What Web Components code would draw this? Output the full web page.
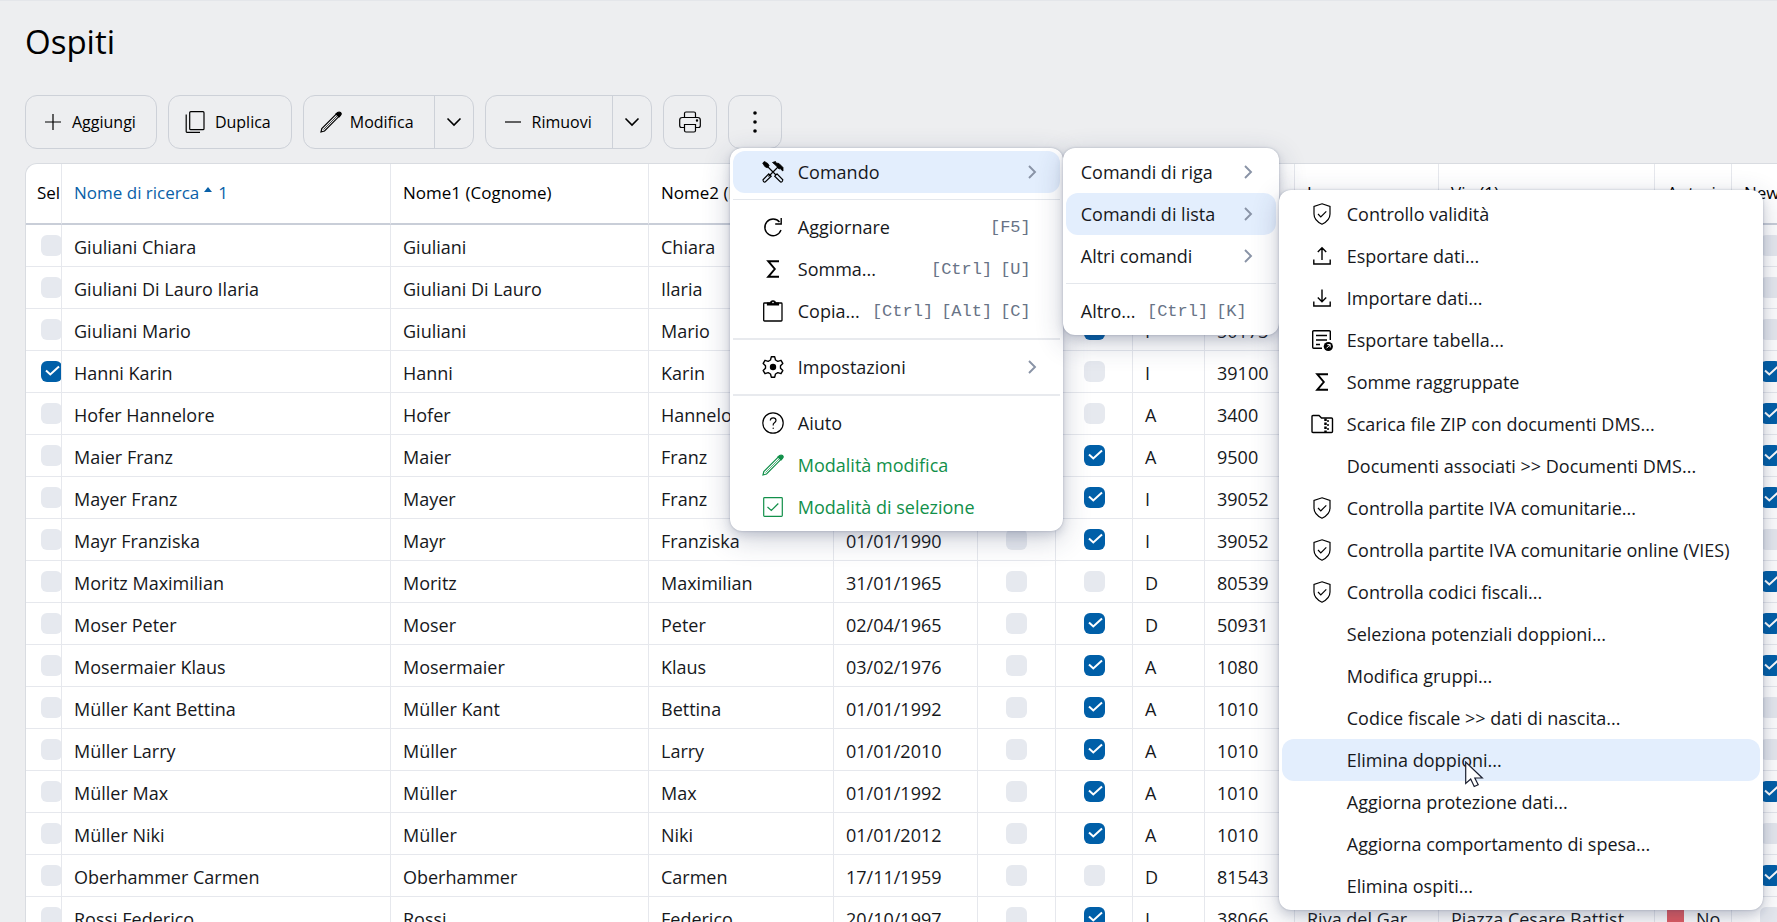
<!DOCTYPE html>
<html lang="it">
<head>
<meta charset="utf-8">
<title>Ospiti</title>
<style>
  html, body { margin: 0; height: 100%; }
  body {
    font-family: "Open Sans", "Noto Sans", sans-serif;
    color: #16181c;
    background: #edeef0;
    overflow: hidden;
  }
</style>
</head>
<body>
<guests-page></guests-page>

<script>
const ICONS = {
  plus: '<path d="M3 11h16M11 3v16"/>',
  minus: '<path d="M3 11h16"/>',
  copy: '<rect x="4.700" y=".7" width="14.300" height="18" rx="1"/><path d="M1.200 3.500V20.500q0 .8.8.8H15"/>',
  pencil: '<path d="M1 21l.8-3.500L16.500 2.800l2.500 2.500L4.500 20z"/><path d="M3.500 18.500L17 5" stroke-width=".7"/><path d="M16 3q2.500-3 4.500-1.500T19 6z" fill="currentColor"/>',
  down: '<path d="M4.500 7.500L11 14l6.500-6.500" stroke-width="1.600"/>',
  right: '<path d="M8 5l6 6-6 6" stroke-width="1.900"/>',
  print: '<path d="M5.500 6V2.500Q5.500 1 7 1h8q1.500 0 1.500 1.500V6M5.500 16.500H2.500Q.7 16.500.7 14.500V9Q.7 6.500 3.200 6.500h15.600Q21.300 6.500 21.300 9v5.500q0 2-1.800 2h-3"/><path d="M5.500 13.500h11V19.500q0 1.500-1.500 1.500H7q-1.500 0-1.500-1.500z"/><circle cx="18" cy="9.500" r=".6" fill="currentColor"/>',
  dots: '<g fill="currentColor" stroke="none"><circle cx="11" cy="2" r="1.800"/><circle cx="11" cy="11" r="1.800"/><circle cx="11" cy="20" r="1.800"/></g>',
  tools: '<path d="M5 5l9 9M16.500 5.500L6.500 15.500"/><path d="M.7 2l1.800-1.500 3.500 2.200 1.200 2.300-2 1.800L2.800 5.500z" fill="currentColor" stroke-width=".8"/><path d="M10.500 1.500L13.500.5 14 2 17 2.500 21 6.500V10l-1.500-1-1-1.500L17 8l-3-3.500z" fill="currentColor" stroke-width=".8"/><path d="M6.800 12.800l2.400 2.400-6 5.800q-2 .5-2.200-2.200z"/><path d="M15 12.800l-2.300 2.400L18.500 21q2 .3 2.300-2.200z"/>',
  refresh: '<path d="M19 14A8.300 8.300 0 1 1 17.500 6M19.200 2v6h-6" stroke-width="1.400"/>',
  sigma: '<path d="M17 3.200H6.200L12.800 11 6.200 18.800H17" stroke-width="1.900"/>',
  clipboard: '<rect x="1.700" y="3" width="18.300" height="18" rx=".8" stroke-width="1.300"/><path d="M5.500 3v2h11V3h-3Q13.500.8 11 .8T8.500 3z" fill="currentColor"/><circle cx="11" cy="2.500" r=".8" fill="#fff" stroke="none"/>',
  gear: '<path d="M9.300.8h3.400l.8 3.200 2.300 1.300 3.200-1 1.800 3.100L18.500 9.700v2.600l2.300 2.300-1.800 3.100-3.200-1-2.300 1.300-.8 3.200H9.300l-.8-3.200-2.300-1.300-3.200 1-1.800-3.100 2.300-2.300V9.700L1.200 7.400 3 4.300l3.200 1L8.500 4z" stroke-width="1.400" stroke-linejoin="round"/><circle cx="11" cy="11" r="3.200" fill="currentColor" stroke="none"/>',
  help: '<circle cx="11" cy="11" r="10.200"/><path d="M8.300 8.500Q8.500 5.800 11.200 5.800T14 8.300Q14 9.800 12.400 10.700T11.200 13.500"/><circle cx="11.200" cy="16.300" r=".7" fill="currentColor" stroke="none"/>',
  checkbox: '<rect x="1.700" y="1.700" width="18.600" height="18.600" rx=".8"/><path d="M5.500 11l3.800 3.500 7-7"/>',
  shield: '<path d="M11 .8l8 2.700v7.500q0 6.500-8 10.200Q3 17.500 3 11V3.500z"/><path d="M7 11l2.800 2.800 5.500-5.500"/>',
  upload: '<path d="M2.800 14.500v4.500h16.400v-4.500M11 15V3M6.800 7L11 2.800 15.200 7" stroke-width="1.400"/>',
  download: '<path d="M2.800 14.500v4.500h16.400v-4.500M11 2.500v12M6.800 10.500L11 14.700l4.200-4.200" stroke-width="1.400"/>',
  tableOut: '<path d="M19.300 11V2.700q0-1-1-1H2.700q-1 0-1 1v15.600q0 1 1 1H11M5 6.500h11M5 11h11M5 15.500h4" stroke-width="1.400"/><circle cx="17.300" cy="17.500" r="4.600" fill="currentColor" stroke="none"/><path d="M15.500 19.300l3.500-3.500M16.300 15.600h2.900v2.900" stroke="#fff" stroke-width="1"/>',
  zip: '<path d="M1 18.500V3.500q0-1 1-1h6l2.500 2.500H20.500q1 0 1 1v12.500q0 1-1 1H2q-1 0-1-1z" stroke-width="1.400"/><path d="M14.500 5.500v13.500" stroke-width="2.500" stroke-dasharray="2.500 1.500"/><path d="M17 7v12" stroke-width="1.500" stroke-dasharray="2 2"/>'
};

const define = (name, css, html) => customElements.define(name, class extends HTMLElement {
  connectedCallback() {
    if (this.shadowRoot) return;
    const root = this.attachShadow({ mode: "open" });
    const template = document.createElement("template");
    template.innerHTML = `<style>${css}</style>${typeof html === "function" ? html(this) : html}`;
    root.append(template.content.cloneNode(true));
  }
});

define("ui-icon", `
  :host { display: block; width: 22px; height: 22px; flex: none; }
  svg { display: block; width: 100%; height: 100%; overflow: visible; }`,
  el => `<svg viewBox="0 0 22 22" fill="none" stroke="currentColor" stroke-width="1.200" aria-hidden="true">${ICONS[el.getAttribute("name")] || ""}</svg>`);

define("tool-button", `
  :host { display: flex; height: 54px; box-sizing: border-box; border: 1px solid #cdd1d8; border-radius: 12px; color: #000; }
  button {
    display: flex; align-items: center; gap: 8px; padding: 0 20px 0 16px;
    font: inherit; font-size: 16px; line-height: 24px; color: inherit;
    background: none; border: 0;
  }
  button.icon { padding: 0 15px; }
  button.more { padding: 0 8px; border-left: 1px solid #cdd1d8; }`,
  el => {
    const icon = `<ui-icon name="${el.getAttribute("icon")}"></ui-icon>`;
    if (el.hasAttribute("label")) return `<button class="icon" type="button" aria-label="${el.getAttribute("label")}">${icon}</button>`;
    return `<button type="button">${icon}<slot></slot></button>` +
      (el.hasAttribute("split") ? `<button class="more" type="button" aria-label="Altre opzioni"><ui-icon name="down"></ui-icon></button>` : "");
  });

define("menu-panel", `
  :host {
    display: block; box-sizing: border-box; width: max-content; padding: 3px;
    background: #fff; border-radius: 12px;
    box-shadow: 0 0 2px rgba(40, 56, 90, .3), 0 4px 8px rgba(40, 56, 90, .14), 0 8px 28px rgba(40, 56, 90, .24);
  }`, `<div role="menu"><slot></slot></div>`);

define("menu-rule", `
  :host { display: block; height: 1px; margin: 6px 0; background: #e4e7ec; }
  :host([thick]) { height: 2px; background: #e8eaee; }`, ``);

define("menu-entry", `
  :host { display: block; position: relative; }
  button {
    display: flex; align-items: center; width: 100%; height: 42px; box-sizing: border-box;
    padding: 0 29px 1px; border: 0; border-radius: 12px; background: none;
    font: inherit; font-size: 18px; line-height: 26px; color: inherit; text-align: left; white-space: nowrap;
  }
  ui-icon { color: #000; margin-right: 14px; }
  :host([plain]) button { padding-left: 15px; }
  :host([active]) button { background: #e3eefd; }
  :host([tone="green"]), :host([tone="green"]) ui-icon { color: #12904a; }
  .end { margin-left: auto; display: flex; gap: 8px; padding-left: 10px; }
  kbd { font: 17px/24px "Liberation Mono", monospace; color: #687386; padding-top: 2px; }
  .end ui-icon { color: #8993a6; margin: 0 -12px 0 0; }
  ::slotted(menu-panel) { position: absolute; top: -3px; left: calc(100% + 3px); z-index: 1; }`,
  el => {
    const keys = (el.getAttribute("keys") || "").split(" ").filter(Boolean);
    const end = el.hasAttribute("arrow") ? `<ui-icon name="right"></ui-icon>` : keys.map(k => `<kbd>[${k}]</kbd>`).join("");
    return `<button type="button" role="menuitem">` +
      (el.hasAttribute("plain") ? "" : `<ui-icon name="${el.getAttribute("icon") || ""}"></ui-icon>`) +
      `<span>${el.getAttribute("text")}</span>` +
      (end ? `<span class="end">${end}</span>` : "") + `</button><slot></slot>`;
  });

define("guest-table", `
  :host { display: block; overflow: hidden; box-sizing: border-box; background: #fff; border: solid #d9dce1; border-width: 1px 0 0 1px; border-radius: 12px 0 0 0; }
  table { border-collapse: separate; border-spacing: 0; table-layout: fixed; width: 1784px; font-size: 18px; line-height: 26px; }
  th, td { box-sizing: border-box; padding: 0 0 0 12px; border-right: 1px solid #e6e8ed; overflow: hidden; white-space: nowrap; text-align: left; font-weight: 400; }
  th { height: 61px; font-size: 17px; color: #000; border-bottom: 2px solid #c9ced8; padding-bottom: 2px; }
  td { height: 42px; border-bottom: 1px solid #e6e8ed; padding-top: 2px; }
  th.sorted { color: #0860a8; }
  .arrow { display: inline-block; vertical-align: 7px; margin: 0 6px 0 5px; border: solid transparent; border-width: 0 4px 5px; border-bottom-color: #0860a8; }
  td.center { padding-left: 0; text-align: center; }
  td.sel { padding-left: 15px; }
  th.sel { padding-left: 11px; }
  input {
    appearance: none; display: inline-block; width: 21px; height: 21px; margin: 0 0 5px; vertical-align: middle;
    border-radius: 6px; background: #e6e9ef;
  }
  input:checked { background: #005fa8 url('data:image/svg+xml,<svg xmlns="http://www.w3.org/2000/svg" viewBox="0 0 21 21" fill="none" stroke="white" stroke-width="2"><path d="M5 9.500l4.300 4 8.700-8"/></svg>'); }
  .flag { display: flex; align-items: center; gap: 12px; }
  .flag i { width: 17px; height: 34px; background: #e25c62; }`,
  () => {
    const cols = [36, 329, 258, 185, 144, 78, 77, 72, 90, 144, 216, 77, 78];
    const rows = [
      ["Giuliani Chiara", "Giuliani", "Chiara", "", "", "", 0, 0],
      ["Giuliani Di Lauro Ilaria", "Giuliani Di Lauro", "Ilaria", "", "", "", 0, 0],
      ["Giuliani Mario", "Giuliani", "Mario", "", "I", "50173", 1, 0],
      ["Hanni Karin", "Hanni", "Karin", "", "I", "39100", 0, 1],
      ["Hofer Hannelore", "Hofer", "Hannelore", "", "A", "3400", 0, 1],
      ["Maier Franz", "Maier", "Franz", "", "A", "9500", 1, 1],
      ["Mayer Franz", "Mayer", "Franz", "", "I", "39052", 1, 1],
      ["Mayr Franziska", "Mayr", "Franziska", "01/01/1990", "I", "39052", 1, 0],
      ["Moritz Maximilian", "Moritz", "Maximilian", "31/01/1965", "D", "80539", 0, 1],
      ["Moser Peter", "Moser", "Peter", "02/04/1965", "D", "50931", 1, 1],
      ["Mosermaier Klaus", "Mosermaier", "Klaus", "03/02/1976", "A", "1080", 1, 1],
      ["Müller Kant Bettina", "Müller Kant", "Bettina", "01/01/1992", "A", "1010", 1, 0],
      ["Müller Larry", "Müller", "Larry", "01/01/2010", "A", "1010", 1, 0],
      ["Müller Max", "Müller", "Max", "01/01/1992", "A", "1010", 1, 1],
      ["Müller Niki", "Müller", "Niki", "01/01/2012", "A", "1010", 1, 0],
      ["Oberhammer Carmen", "Oberhammer", "Carmen", "17/11/1959", "D", "81543", 0, 1],
      ["Rossi Federico", "Rossi", "Federico", "20/10/1997", "I", "38066", 1, 0, "Riva del Gar", "Piazza Cesare Battist", "No"]
    ];
    const box = (on, label) => `<input type="checkbox" aria-label="${label}"${on ? " checked" : ""}>`;
    return `<table><colgroup>${cols.map(w => `<col style="width:${w}px">`).join("")}</colgroup>
      <thead><tr><th class="sel">Sel</th><th class="sorted">Nome di ricerca<span class="arrow"></span>1</th><th>Nome1 (Cognome)</th><th>Nome2 (Nome)</th>
      <th></th><th></th><th></th><th></th><th></th><th>Luogo</th><th>Via (1)</th><th>Autori</th><th>New</th></tr></thead>
      <tbody>${rows.map(r => `<tr><td class="sel">${box(r[0] === "Hanni Karin", "Seleziona " + r[0])}</td>
        <td>${r[0]}</td><td>${r[1]}</td><td>${r[2]}</td><td>${r[3]}</td>
        <td class="center">${box(0, "Opzione 1 " + r[0])}</td><td class="center">${box(r[6], "Opzione 2 " + r[0])}</td>
        <td>${r[4]}</td><td>${r[5]}</td><td>${r[8] || ""}</td><td>${r[9] || ""}</td>
        <td>${r[10] ? `<span class="flag"><i></i>${r[10]}</span>` : ""}</td><td class="center">${box(r[7], "Newsletter " + r[0])}</td></tr>`).join("")}</tbody></table>`;
  });

define("mouse-pointer", `
  :host { display: block; width: 19px; height: 27px; pointer-events: none; }
  svg { display: block; }`,
  `<svg width="19" height="27" viewBox="0 0 19 27"><path d="M.7 1v21.500l5-4.500 3.500 7.500 4-1.800L9.800 17h7.500z" fill="#fff" stroke="#1a1f30" stroke-width="1.200"/></svg>`);

define("guests-page", `
  :host { display: flex; flex-direction: column; height: 100vh; box-sizing: border-box; padding: 17px 0 0 25px; border-top: 1px solid #e4e6ea; }
  h1 { margin: 0 0 29px; font-size: 33px; line-height: 48px; font-weight: 400; color: #000; }
  .tools { display: flex; gap: 11px; margin-bottom: 14px; }
  .anchor { position: relative; z-index: 2; }
  .anchor > menu-panel { position: absolute; top: calc(100% - 1px); left: 2px; }
  .main { min-width: 333px; }
  .side { min-width: 216px; }
  .wide { min-width: 484px; }
  mouse-pointer { position: absolute; left: 183px; top: 22px; z-index: 3; }
  guest-table { flex: 1; min-height: 0; }`,
  `<h1>Ospiti</h1>
  <div class="tools" role="toolbar" aria-label="Comandi">
    <tool-button icon="plus">Aggiungi</tool-button>
    <tool-button icon="copy">Duplica</tool-button>
    <tool-button icon="pencil" split>Modifica</tool-button>
    <tool-button icon="minus" split>Rimuovi</tool-button>
    <tool-button icon="print" label="Stampa"></tool-button>
    <div class="anchor">
      <tool-button icon="dots" label="Altro"></tool-button>
      <menu-panel class="main">
        <menu-entry icon="tools" text="Comando" arrow active>
          <menu-panel class="side">
            <menu-entry plain text="Comandi di riga" arrow></menu-entry>
            <menu-entry plain text="Comandi di lista" arrow active>
              <menu-panel class="wide">
                <menu-entry icon="shield" text="Controllo validità"></menu-entry>
                <menu-entry icon="upload" text="Esportare dati..."></menu-entry>
                <menu-entry icon="download" text="Importare dati..."></menu-entry>
                <menu-entry icon="tableOut" text="Esportare tabella..."></menu-entry>
                <menu-entry icon="sigma" text="Somme raggruppate"></menu-entry>
                <menu-entry icon="zip" text="Scarica file ZIP con documenti DMS..."></menu-entry>
                <menu-entry text="Documenti associati &amp;gt;&amp;gt; Documenti DMS..."></menu-entry>
                <menu-entry icon="shield" text="Controlla partite IVA comunitarie..."></menu-entry>
                <menu-entry icon="shield" text="Controlla partite IVA comunitarie online (VIES)"></menu-entry>
                <menu-entry icon="shield" text="Controlla codici fiscali..."></menu-entry>
                <menu-entry text="Seleziona potenziali doppioni..."></menu-entry>
                <menu-entry text="Modifica gruppi..."></menu-entry>
                <menu-entry text="Codice fiscale &amp;gt;&amp;gt; dati di nascita..."></menu-entry>
                <menu-entry text="Elimina doppioni..." active><mouse-pointer></mouse-pointer></menu-entry>
                <menu-entry text="Aggiorna protezione dati..."></menu-entry>
                <menu-entry text="Aggiorna comportamento di spesa..."></menu-entry>
                <menu-entry text="Elimina ospiti..."></menu-entry>
              </menu-panel>
            </menu-entry>
            <menu-entry plain text="Altri comandi" arrow></menu-entry>
            <menu-rule></menu-rule>
            <menu-entry plain text="Altro..." keys="Ctrl K"></menu-entry>
          </menu-panel>
        </menu-entry>
        <menu-rule></menu-rule>
        <menu-entry icon="refresh" text="Aggiornare" keys="F5"></menu-entry>
        <menu-entry icon="sigma" text="Somma..." keys="Ctrl U"></menu-entry>
        <menu-entry icon="clipboard" text="Copia..." keys="Ctrl Alt C"></menu-entry>
        <menu-rule thick></menu-rule>
        <menu-entry icon="gear" text="Impostazioni" arrow></menu-entry>
        <menu-rule thick></menu-rule>
        <menu-entry icon="help" text="Aiuto"></menu-entry>
        <menu-entry icon="pencil" text="Modalità modifica" tone="green"></menu-entry>
        <menu-entry icon="checkbox" text="Modalità di selezione" tone="green"></menu-entry>
      </menu-panel>
    </div>
  </div>
  <guest-table></guest-table>`);
</script>
</body>
</html>
